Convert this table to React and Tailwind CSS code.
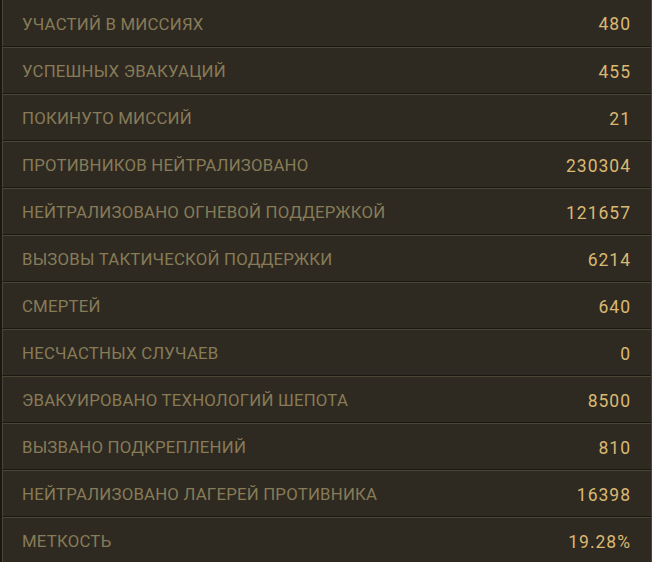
const STATS = [
  ["УЧАСТИЙ В МИССИЯХ", "480"],
  ["УСПЕШНЫХ ЭВАКУАЦИЙ", "455"],
  ["ПОКИНУТО МИССИЙ", "21"],
  ["ПРОТИВНИКОВ НЕЙТРАЛИЗОВАНО", "230304"],
  ["НЕЙТРАЛИЗОВАНО ОГНЕВОЙ ПОДДЕРЖКОЙ", "121657"],
  ["ВЫЗОВЫ ТАКТИЧЕСКОЙ ПОДДЕРЖКИ", "6214"],
  ["СМЕРТЕЙ", "640"],
  ["НЕСЧАСТНЫХ СЛУЧАЕВ", "0"],
  ["ЭВАКУИРОВАНО ТЕХНОЛОГИЙ ШЕПОТА", "8500"],
  ["ВЫЗВАНО ПОДКРЕПЛЕНИЙ", "810"],
  ["НЕЙТРАЛИЗОВАНО ЛАГЕРЕЙ ПРОТИВНИКА", "16398"],
  ["МЕТКОСТЬ", "19.28%"],
];

export default function App() {
  return (
    <div
      className="h-[562px] w-[652px] overflow-hidden bg-[#1a1812] pl-[2px]"
      style={{ fontFamily: '"Roboto", "Liberation Sans", sans-serif' }}
    >
      <div className="flex flex-col border-r border-[#4a4535]">
        {STATS.map(([label, value], i) => (
          <div
            key={label}
            className={
              "flex h-[47px] shrink-0 items-center justify-between border-l border-b border-b-[#1a1812] border-l-[#4a4535] bg-[#2e2a21] pl-[19px] pr-[20px] pt-[3px] " +
              (i === 0 ? "" : "border-t border-t-[#4a4535]")
            }
          >
            <span className="text-[16.8px] tracking-[0.2px] text-[#877b58]">{label}</span>
            <span className="text-[17.5px] tracking-[1px] text-[#dbb872]">{value}</span>
          </div>
        ))}
      </div>
    </div>
  );
}
